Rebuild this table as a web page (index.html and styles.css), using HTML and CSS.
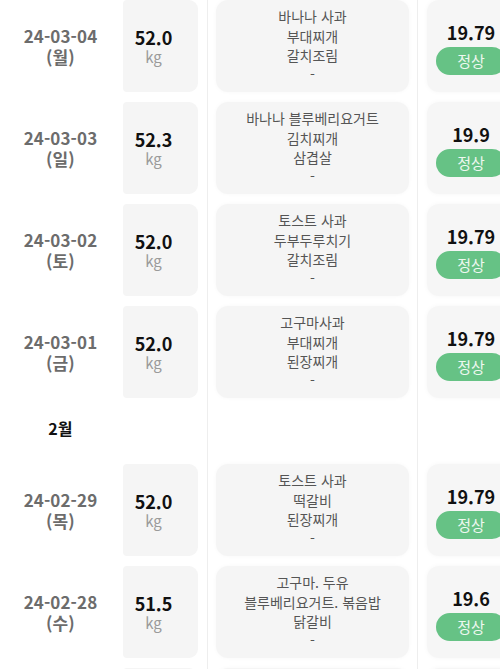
FILE: index.html
```html
<!DOCTYPE html>
<html lang="ko">
<head>
<meta charset="utf-8">
<link rel="stylesheet" href="styles.css">
</head>
<body>
<div class="list">
  <div class="row">
    <div class="date"><span>24-03-04</span><span>(월)</span></div>
    <div class="cell weight"><div class="card wcard"><span class="num">52.0</span><span class="unit">kg</span></div></div>
    <div class="cell meal"><div class="card mcard"><span>바나나 사과</span><span>부대찌개</span><span>갈치조림</span><span>-</span></div></div>
    <div class="cell bmi"><div class="card bcard"><span class="num">19.79</span><span class="badge">정상</span></div></div>
  </div>
  <div class="row">
    <div class="date"><span>24-03-03</span><span>(일)</span></div>
    <div class="cell weight"><div class="card wcard"><span class="num">52.3</span><span class="unit">kg</span></div></div>
    <div class="cell meal"><div class="card mcard"><span>바나나 블루베리요거트</span><span>김치찌개</span><span>삼겹살</span><span>-</span></div></div>
    <div class="cell bmi"><div class="card bcard"><span class="num">19.9</span><span class="badge">정상</span></div></div>
  </div>
  <div class="row">
    <div class="date"><span>24-03-02</span><span>(토)</span></div>
    <div class="cell weight"><div class="card wcard"><span class="num">52.0</span><span class="unit">kg</span></div></div>
    <div class="cell meal"><div class="card mcard"><span>토스트 사과</span><span>두부두루치기</span><span>갈치조림</span><span>-</span></div></div>
    <div class="cell bmi"><div class="card bcard"><span class="num">19.79</span><span class="badge">정상</span></div></div>
  </div>
  <div class="row">
    <div class="date"><span>24-03-01</span><span>(금)</span></div>
    <div class="cell weight"><div class="card wcard"><span class="num">52.0</span><span class="unit">kg</span></div></div>
    <div class="cell meal"><div class="card mcard"><span>고구마사과</span><span>부대찌개</span><span>된장찌개</span><span>-</span></div></div>
    <div class="cell bmi"><div class="card bcard"><span class="num">19.79</span><span class="badge">정상</span></div></div>
  </div>
  <div class="row month-row">
    <div class="date month">2월</div>
    <div class="cell weight"></div>
    <div class="cell meal"></div>
    <div class="cell bmi"></div>
  </div>
  <div class="row">
    <div class="date"><span>24-02-29</span><span>(목)</span></div>
    <div class="cell weight"><div class="card wcard"><span class="num">52.0</span><span class="unit">kg</span></div></div>
    <div class="cell meal"><div class="card mcard"><span>토스트 사과</span><span>떡갈비</span><span>된장찌개</span><span>-</span></div></div>
    <div class="cell bmi"><div class="card bcard"><span class="num">19.79</span><span class="badge">정상</span></div></div>
  </div>
  <div class="row">
    <div class="date"><span>24-02-28</span><span>(수)</span></div>
    <div class="cell weight"><div class="card wcard"><span class="num">51.5</span><span class="unit">kg</span></div></div>
    <div class="cell meal"><div class="card mcard"><span>고구마. 두유</span><span>블루베리요거트. 볶음밥</span><span>닭갈비</span><span>-</span></div></div>
    <div class="cell bmi"><div class="card bcard"><span class="num">19.6</span><span class="badge">정상</span></div></div>
  </div>
  <div class="row">
    <div class="date"></div>
    <div class="cell weight"><div class="card wcard"></div></div>
    <div class="cell meal"><div class="card mcard"></div></div>
    <div class="cell bmi"><div class="card bcard"></div></div>
  </div>
</div>
</body>
</html>
```

FILE: styles.css
```css
html, body {
  margin: 0;
  padding: 0;
  background: #ffffff;
  overflow: hidden;
}
body {
  font-family: "Noto Sans CJK KR", "Noto Sans", sans-serif;
  width: 500px;
}
.list {
  display: flex;
  flex-direction: column;
  margin-top: -5px;
  width: 560px;
}
.row {
  display: flex;
  align-items: stretch;
  height: 102px;
}
.month-row {
  height: 56px;
}
.date {
  width: 120px;
  flex: none;
  display: flex;
  flex-direction: column;
  align-items: center;
  justify-content: center;
  color: #6c6c6c;
  font-size: 17px;
  font-weight: 700;
  line-height: 21px;
  letter-spacing: 0.1px;
  padding-left: 1px;
  box-sizing: border-box;
}
.date.month {
  color: #111;
  font-size: 16px;
  font-weight: 700;
  padding-bottom: 6px;
}
.cell {
  flex: none;
  display: flex;
  align-items: center;
  box-sizing: border-box;
  padding: 5px 0;
}
.weight {
  width: 88px;
  padding-left: 3px;
  border-right: 1px solid #eeeeee;
}
.meal {
  width: 210px;
  padding-left: 8px;
  border-right: 1px solid #eeeeee;
}
.bmi {
  width: 140px;
  padding-left: 9px;
}
.card {
  height: 92px;
  box-sizing: border-box;
  background: #f5f5f5;
  display: flex;
  flex-direction: column;
  align-items: center;
  justify-content: center;
}
.wcard {
  width: 75px;
  border-radius: 4px 9px 9px 4px;
  padding-right: 14px;
  padding-top: 2px;
}
.wcard .num {
  color: #111;
  font-size: 18px;
  font-weight: 700;
  line-height: 20px;
}
.wcard .unit {
  color: #9a9a9a;
  font-size: 15px;
  line-height: 20px;
}
.mcard {
  width: 193px;
  border-radius: 12px;
  box-shadow: 0 0 4px rgba(0, 0, 0, 0.03);
  color: #555555;
  font-size: 14px;
  line-height: 19.3px;
  text-align: center;
}
.bcard {
  width: 88px;
  border-radius: 12px;
  background: #f6f6f6;
  box-shadow: 0 0 5px rgba(0, 0, 0, 0.04);
  gap: 3px;
}
.bcard .num {
  color: #111;
  font-size: 18px;
  font-weight: 700;
  line-height: 24px;
  margin-top: 2px;
}
.badge {
  width: 70px;
  height: 28px;
  border-radius: 14px;
  background: #66c285;
  color: #eef8f0;
  font-size: 15px;
  line-height: 28px;
  text-align: center;
}
```
